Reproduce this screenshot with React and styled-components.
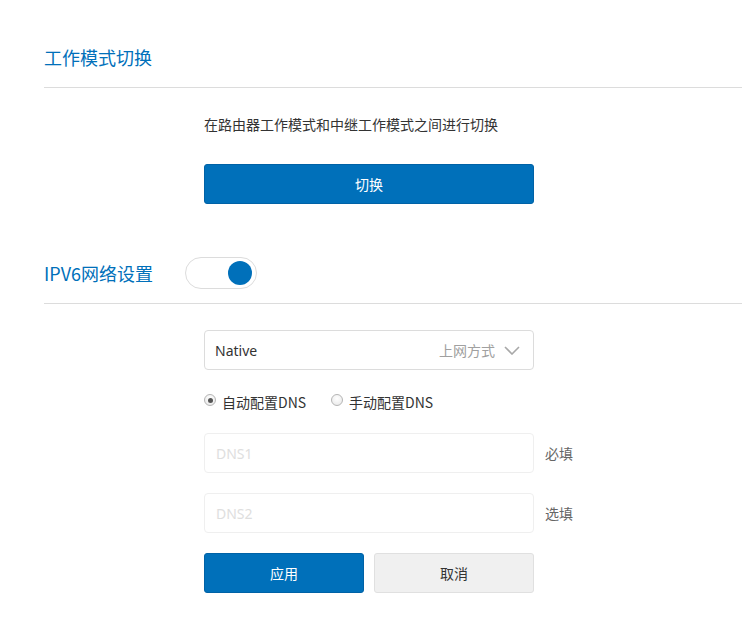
import React, { useState } from "react";
import styled, { createGlobalStyle } from "styled-components";

const Global = createGlobalStyle`
  html, body { margin: 0; padding: 0; background: #fff; }
  body { font-family: "Noto Sans", "Noto Sans CJK SC", sans-serif; color: #333; }
  * { box-sizing: border-box; }
`;

const Page = styled.div`
  padding: 27px 0 0 44px;
`;

const Header = styled.div`
  display: flex;
  align-items: center;
  height: 61px;
  border-bottom: 1px solid #dcdcdc;
  margin-top: ${(p) => p.$mt || 0}px;
`;

const Title = styled.h2`
  margin: 0;
  font-size: 18px;
  font-weight: 400;
  color: #0070ba;
  line-height: 24px;
  font-family: "Noto Sans CJK SC", sans-serif;
`;

const Toggle = styled.button`
  margin-left: 32px;
  width: 72px;
  height: 32px;
  border: 1px solid #dcdcdc;
  border-radius: 16px;
  background: #fff;
  padding: 0 4px;
  display: flex;
  align-items: center;
  justify-content: ${(p) => (p.$on ? "flex-end" : "flex-start")};
  cursor: pointer;
`;

const Knob = styled.span`
  width: 24px;
  height: 24px;
  border-radius: 50%;
  background: ${(p) => (p.$on ? "#0070ba" : "#ccc")};
`;

const Body = styled.div`
  padding: 26px 0 0 160px;
  display: flex;
  flex-direction: column;
  align-items: flex-start;
`;

const Desc = styled.p`
  margin: 0;
  font-size: 14px;
  line-height: 20px;
  color: #333;
  font-family: "Noto Sans CJK SC", sans-serif;
`;

const Button = styled.button`
  height: 40px;
  width: ${(p) => p.$w}px;
  flex-shrink: 0;
  border-radius: 3px;
  font-size: 14px;
  font-family: "Noto Sans CJK SC", sans-serif;
  cursor: pointer;
  border: 1px solid ${(p) => (p.$primary ? "#0062a6" : "#e0e0e0")};
  background: ${(p) => (p.$primary ? "#0070ba" : "#f0f0f0")};
  color: ${(p) => (p.$primary ? "#fff" : "#333")};
  margin-top: ${(p) => p.$mt || 0}px;
`;

const Select = styled.div`
  width: 330px;
  height: 40px;
  border: 1px solid #dcdcdc;
  border-radius: 4px;
  display: flex;
  align-items: center;
  padding: 0 13px 0 10px;
`;

const SelectValue = styled.span`
  flex: 1;
  font-size: 14px;
  color: #333;
`;

const SelectHint = styled.span`
  font-size: 14px;
  color: #a0a0a0;
  font-family: "Noto Sans CJK SC", sans-serif;
  margin-right: 9px;
`;

const RadioRow = styled.div`
  display: flex;
  align-items: center;
  margin-top: 22px;
  height: 20px;
`;

const RadioLabel = styled.label`
  display: flex;
  align-items: center;
  font-size: 14px;
  line-height: 20px;
  color: #333;
  margin-right: 25px;
  white-space: nowrap;
  font-family: "Noto Sans CJK SC", sans-serif;
`;

const RadioDot = styled.span`
  width: 12px;
  height: 12px;
  border-radius: 50%;
  border: 1px solid #b5b5b5;
  background: radial-gradient(circle at 50% 35%, #fff 0%, #e6e6e6 100%);
  margin-right: 6px;
  margin-top: -4px;
  display: flex;
  align-items: center;
  justify-content: center;
  &::after {
    content: "";
    width: 5px;
    height: 5px;
    border-radius: 50%;
    background: ${(p) => (p.$checked ? "#555" : "transparent")};
  }
`;

const FieldRow = styled.div`
  display: flex;
  align-items: center;
  margin-top: ${(p) => p.$mt}px;
`;

const Input = styled.input`
  width: 330px;
  flex-shrink: 0;
  height: 40px;
  border: 1px solid #efefef;
  border-radius: 4px;
  padding: 0 11px;
  font-size: 14px;
  font-family: "Noto Sans", sans-serif;
  color: #333;
  outline: none;
  &::placeholder { color: #dedede; }
`;

const FieldNote = styled.span`
  margin-left: 11px;
  font-size: 14px;
  color: #666;
  white-space: nowrap;
  font-family: "Noto Sans CJK SC", sans-serif;
`;

const Actions = styled.div`
  display: flex;
  gap: 10px;
  margin-top: 20px;
`;

const Chevron = () => (
  <svg width="16" height="9" viewBox="0 0 16 9" fill="none">
    <path d="M1 1l7 7 7-7" stroke="#a8a8a8" strokeWidth="1.6" />
  </svg>
);

export default function App() {
  const [on, setOn] = useState(true);
  return (
    <>
      <Global />
      <Page>
        <Header>
          <Title>工作模式切换</Title>
        </Header>
        <Body>
          <Desc>在路由器工作模式和中继工作模式之间进行切换</Desc>
          <Button $primary $w={330} $mt={30}>切换</Button>
        </Body>
        <Header $mt={39}>
          <Title>IPV6网络设置</Title>
          <Toggle $on={on} onClick={() => setOn(!on)}>
            <Knob $on={on} />
          </Toggle>
        </Header>
        <Body>
          <Select>
            <SelectValue>Native</SelectValue>
            <SelectHint>上网方式</SelectHint>
            <Chevron />
          </Select>
          <RadioRow>
            <RadioLabel>
              <RadioDot $checked />
              自动配置DNS
            </RadioLabel>
            <RadioLabel>
              <RadioDot />
              手动配置DNS
            </RadioLabel>
          </RadioRow>
          <FieldRow $mt={21}>
            <Input placeholder="DNS1" />
            <FieldNote>必填</FieldNote>
          </FieldRow>
          <FieldRow $mt={20}>
            <Input placeholder="DNS2" />
            <FieldNote>选填</FieldNote>
          </FieldRow>
          <Actions>
            <Button $primary $w={160}>应用</Button>
            <Button $w={160}>取消</Button>
          </Actions>
        </Body>
      </Page>
    </>
  );
}
